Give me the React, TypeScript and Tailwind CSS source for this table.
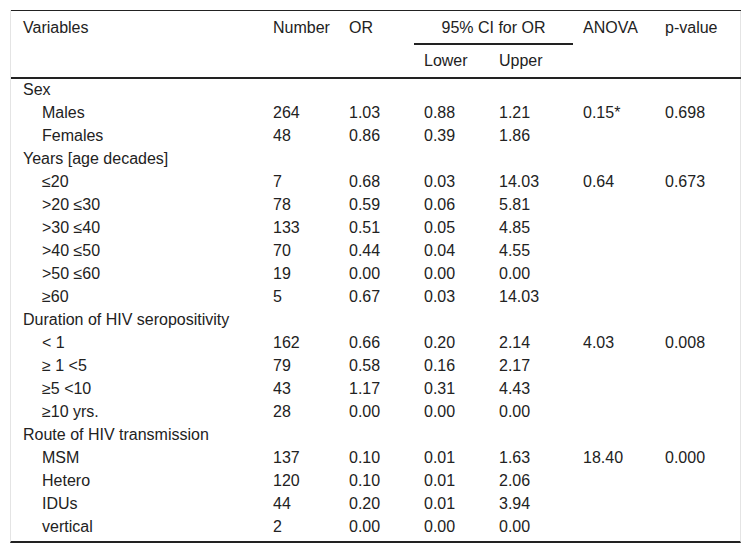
import React from "react";

type Row = { label: string; indent?: boolean; n?: string; or?: string; lo?: string; up?: string; anova?: string; p?: string };

const rows: Row[] = [
  { label: "Sex" },
  { label: "Males", indent: true, n: "264", or: "1.03", lo: "0.88", up: "1.21", anova: "0.15*", p: "0.698" },
  { label: "Females", indent: true, n: "48", or: "0.86", lo: "0.39", up: "1.86" },
  { label: "Years [age decades]" },
  { label: "≤20", indent: true, n: "7", or: "0.68", lo: "0.03", up: "14.03", anova: "0.64", p: "0.673" },
  { label: ">20 ≤30", indent: true, n: "78", or: "0.59", lo: "0.06", up: "5.81" },
  { label: ">30 ≤40", indent: true, n: "133", or: "0.51", lo: "0.05", up: "4.85" },
  { label: ">40 ≤50", indent: true, n: "70", or: "0.44", lo: "0.04", up: "4.55" },
  { label: ">50 ≤60", indent: true, n: "19", or: "0.00", lo: "0.00", up: "0.00" },
  { label: "≥60", indent: true, n: "5", or: "0.67", lo: "0.03", up: "14.03" },
  { label: "Duration of HIV seropositivity" },
  { label: "< 1", indent: true, n: "162", or: "0.66", lo: "0.20", up: "2.14", anova: "4.03", p: "0.008" },
  { label: "≥ 1 <5", indent: true, n: "79", or: "0.58", lo: "0.16", up: "2.17" },
  { label: "≥5 <10", indent: true, n: "43", or: "1.17", lo: "0.31", up: "4.43" },
  { label: "≥10 yrs.", indent: true, n: "28", or: "0.00", lo: "0.00", up: "0.00" },
  { label: "Route of HIV transmission" },
  { label: "MSM", indent: true, n: "137", or: "0.10", lo: "0.01", up: "1.63", anova: "18.40", p: "0.000" },
  { label: "Hetero", indent: true, n: "120", or: "0.10", lo: "0.01", up: "2.06" },
  { label: "IDUs", indent: true, n: "44", or: "0.20", lo: "0.01", up: "3.94" },
  { label: "vertical", indent: true, n: "2", or: "0.00", lo: "0.00", up: "0.00" },
];

export default function App() {
  const td = "pl-[10px] pt-px align-middle whitespace-nowrap";
  const th = "pl-[10px] text-left font-normal align-top pt-[8px] border-b-2 border-[#222] whitespace-nowrap";
  return (
    <div className="w-[751px] h-[555px] bg-white pt-[10px] pl-[10px]" style={{ fontFamily: '"Liberation Sans", Arial, sans-serif' }}>
      <div className="w-[731px] border-x border-[#e4e4e4] pb-[3px] border-b-2 border-b-[#222]">
        <table className="w-[730px] border-collapse table-fixed text-[16px] text-[#222] leading-[18px]">
          <colgroup>
            <col className="w-[252px]" />
            <col className="w-[76px]" />
            <col className="w-[75px]" />
            <col className="w-[75px]" />
            <col className="w-[84px]" />
            <col className="w-[82px]" />
            <col className="w-[86px]" />
          </colgroup>
          <thead>
            <tr className="h-[33px] border-t border-[#222]">
              <th rowSpan={2} className="pl-[12px] text-left font-normal align-top pt-[8px] border-b-2 border-[#222]">Variables</th>
              <th rowSpan={2} className={th}>Number</th>
              <th rowSpan={2} className={th}>OR</th>
              <th colSpan={2} className="text-center font-normal align-top pt-[8px] border-b-2 border-[#222]">95% CI for OR</th>
              <th rowSpan={2} className={th}>ANOVA</th>
              <th rowSpan={2} className={th}>p-value</th>
            </tr>
            <tr className="h-[34px] border-b-2 border-[#222]">
              <th className="pl-[10px] text-left font-normal align-middle">Lower</th>
              <th className="pl-[10px] text-left font-normal align-middle">Upper</th>
            </tr>
          </thead>
          <tbody>
            {rows.map((r, i) => (
              <tr key={i} className="h-[23px]">
                <td className={`${r.indent ? "pl-[31px]" : "pl-[12px]"} pt-px align-middle whitespace-nowrap`}>{r.label}</td>
                <td className={td}>{r.n}</td>
                <td className={td}>{r.or}</td>
                <td className={td}>{r.lo}</td>
                <td className={td}>{r.up}</td>
                <td className={td}>{r.anova}</td>
                <td className={td}>{r.p}</td>
              </tr>
            ))}
          </tbody>
        </table>
      </div>
    </div>
  );
}
